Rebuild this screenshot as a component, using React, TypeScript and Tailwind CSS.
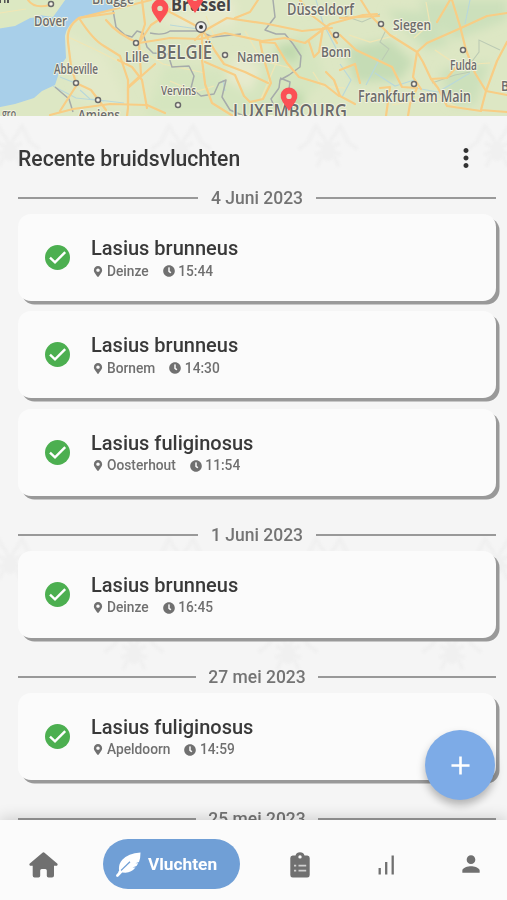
import React from "react";
import { FaMapMarkerAlt, FaClock } from "react-icons/fa";
import { MdMoreVert, MdAdd, MdPerson } from "react-icons/md";

type Place = { t: string; x: number; y: number; w: number; s: number; b?: boolean };

const places: Place[] = [
  { t: "Dover", x: 34, y: 26, w: 33, s: 14 },
  { t: "Brugge", x: 92, y: 4, w: 42, s: 14 },
  { t: "Lille", x: 125, y: 62, w: 24, s: 15 },
  { t: "Abbeville", x: 54, y: 74, w: 44, s: 13.5 },
  { t: "Amiens", x: 78, y: 120, w: 42, s: 14 },
  { t: "Vervins", x: 161, y: 95, w: 35, s: 13 },
  { t: "Namen", x: 237, y: 62, w: 42, s: 14 },
  { t: "Düsseldorf", x: 287, y: 15, w: 67, s: 16 },
  { t: "Siegen", x: 393, y: 30, w: 38, s: 14 },
  { t: "Bonn", x: 321, y: 57, w: 30, s: 14.5 },
  { t: "Fulda", x: 450, y: 70, w: 27, s: 13.5 },
  { t: "Frankfurt am Main", x: 358, y: 102, w: 113, s: 16 },
  { t: "Brussel", x: 171, y: 11, w: 60, s: 17, b: true },
  { t: "BELGIË", x: 156, y: 59, w: 56, s: 20 },
  { t: "LUXEMBOURG", x: 233, y: 118, w: 114, s: 19 },
  { t: "B", x: 501, y: 91, w: 8, s: 14 },
  { t: "gro", x: 2, y: 118, w: 14, s: 13 },
];

const roads = [
  "M28 0 Q34 9 50 5",
  "M114 13L79 18Q66 27 68 42L71 66L76 83L91 90L106 110",
  "M79 18Q93 40 104 46L120 56L128 80V108L127 116",
  "M79 18L115 9L151 0",
  "M106 20Q118 35 139 43L151 25L163 17L170 9",
  "M139 43L145 24L142 0",
  "M139 43L170 38L200 39L225 33L262 41L285 38L305 43L330 24L363 15L377 14",
  "M139 43L141 75L128 87V104",
  "M118 60L132 67L142 80L147 108",
  "M128 88L155 64",
  "M60 111L78 83",
  "M50 115L73 109L110 104L147 105L165 113",
  "M170 12L202 29L215 51L224 64L245 72L268 83",
  "M202 29L202 60L205 83",
  "M195 40L204 31L227 18L268 24L302 31L332 28",
  "M205 62L235 75L244 96L250 102L263 99L271 83L263 56L260 42",
  "M260 42L275 43L287 63L299 77L325 85L339 96",
  "M323 28L319 52L314 57L309 42",
  "M235 18L250 12L258 0",
  "M300 0L310 14L327 27L337 43",
  "M205 84L212 103L233 116",
  "M326 72L334 80L340 96L355 104",
  "M340 18L379 16",
  "M361 0L371 16L390 35L417 52L413 77L421 89",
  "M340 35L356 50L373 58L392 67L402 87L417 88",
  "M417 52L423 62L431 79L447 78L458 65",
  "M437 22L450 0M452 0L460 26L466 50L475 73L486 91L507 95",
  "M417 52L427 43L461 28L487 16L507 13",
  "M340 70L355 64L360 83",
  "M507 42L497 61L486 91L481 110L507 112",
  "M417 88L410 104L408 116M431 79L438 88L447 106L481 111",
  "M380 88L390 87L386 116",
];

const borders = [
  "M113 10L116 27L125 35L132 37L137 31L143 33L147 47L153 53L168 54L172 67L189 66L194 76L191 88L201 96L214 94L219 83L226 80L222 97L230 110L244 116",
  "M150 33Q163 36 170 31L198 31L213 37L241 34",
  "M273 0L275 17L265 30L276 34L285 34L293 44L301 56L300 67L289 75L280 80L279 88",
  "M279 88L271 99L275 108M280 78L290 82L288 96",
  "M55 87L69 99L73 112",
];

const regionLines = "M382 60L389 49L380 42L386 30M500 50L479 40L479 52L470 64M432 83L455 75L470 72M345 16L362 22L380 14";

const dots = [
  [51, 4], [136, 43], [76, 83], [98, 100], [225, 55], [178, 105], [336, 35], [381, 24], [463, 50], [414, 84],
];

function Pin({ x, y }: { x: number; y: number }) {
  return (
    <g transform={`translate(${x} ${y})`}>
      <path d="M0 0L-6.3-9Q-8.9-13-8.3-16.5A8.4 8.4 0 0 1 8.3-16.5Q8.9-13 6.3-9Z" fill="#fb5055" />
      <circle cx="0" cy="-14.6" r="2.7" fill="#dde2c4" />
    </g>
  );
}

function MapView() {
  return (
    <svg className="block h-[116px] w-full shrink-0" viewBox="0 0 507 116">
      <defs>
        <filter id="soft" x="-20%" y="-20%" width="140%" height="140%"><feGaussianBlur stdDeviation="5" /></filter>
        <filter id="soften"><feGaussianBlur stdDeviation="0.5" /></filter>
      </defs>
      <rect width="507" height="116" fill="#dde7c4" />
      <g filter="url(#soft)">
        <path d="M165 65L245 72L310 30L325 80L285 116H145Z" fill="#d5e5bf" />
        <path d="M345 48L390 40L413 62L400 80L355 82Z" fill="#c5dcb5" />
        <path d="M418 0H507V20L455 40L430 18ZM440 70L490 62L475 105L450 105ZM385 10L430 12L450 45L427 50Z" fill="#cce0bb" />
        <path d="M60 30L105 55L130 110L80 98Z" fill="#e2e9c9" />
        <path d="M235 55L262 68L250 92L225 80ZM155 20L235 0V25L180 30Z" fill="#e7eacd" />
        <path d="M277 45L301 43L296 63L278 56ZM285 91L304 94L302 110L276 108Z" fill="#bfd9ad" />
      </g>
      <g filter="url(#soften)">
        <path d="M-4 29L14 25L29 18Q37 18 39 15L53 17L68-4H134L117 9L79 17Q66 26 65 36L66 58Q60 65 58 76L55 85L42 91L34 98L15 104L-4 108Z" fill="#a8cfe9" />
        <path d="M-4 29L15 26L32 17L68-4H-4Z" fill="#dce8c2" />
        <g fill="none" stroke="#b9d8da" strokeWidth="1.2">
          <path d="M60 77L75 83M53 86L76 98L104 101M80 90L90 99L124 103M225 91L223 80M170 25L205 30M316 0L323 23L341 58M414 80L395 86L375 73" />
          <path d="M340 64L351 80L342 97M380 58L366 85M470 0L465 24M410 87L438 92L470 73" />
        </g>
        <g fill="none" stroke="#f1e6b4" strokeWidth="1.2">
          <path d="M0 13L26 9M68 37L92 48L130 67M170 81L195 92L214 86M141 50L163 64L205 73M206 16L215 38M245 31L262 61L291 68M313 72L322 86L345 88M349 35L370 42L397 35M426 2L430 24L414 38M435 50L457 65L490 63M392 105L434 97L460 108M277 61L261 99" />
        </g>
        <g fill="none" stroke="#a6abaa" strokeWidth="1.5" strokeLinejoin="round">
          {borders.map((d) => <path key={d} d={d} />)}
        </g>
        <path d={regionLines} fill="none" stroke="#bccbb4" strokeWidth="1.1" />
        <g fill="none" stroke="#f8cd85" strokeWidth="2.2" strokeLinejoin="round" strokeLinecap="round">
          {roads.map((d) => <path key={d} d={d} />)}
        </g>
      </g>
      {dots.map(([x, y]) => (
        <circle key={`${x}-${y}`} cx={x} cy={y} r="2.5" fill="#f5f2e6" stroke="#6a6a6a" strokeWidth="1.5" />
      ))}
      <circle cx="201" cy="27" r="5.2" fill="#eee" stroke="#666" strokeWidth="1.4" />
      <circle cx="201" cy="27" r="2" fill="#333" />
      <path d="M0 0h1v3h-1zM4 0h1.5v3H4zM7 0h2v3H7z" fill="#555" />
      <g fontFamily="'Open Sans', 'Noto Sans', sans-serif" stroke="#f2f2df" strokeWidth="2.2" strokeLinejoin="round" paintOrder="stroke">
        {places.map((p) => (
          <text key={p.t} x={p.x} y={p.y} fontSize={p.s} fontWeight={p.b ? 700 : 600} textLength={p.w} lengthAdjust="spacingAndGlyphs" fill={p.b ? "#444" : "#6c6c6c"}>{p.t}</text>
        ))}
      </g>
      <Pin x={160} y={23} />
      <Pin x={195} y={13} />
      <Pin x={289} y={111} />
    </svg>
  );
}

function Ant({ x, y }: { x: number; y: number }) {
  return (
    <g transform={`translate(${x} ${y})`} fill="none" stroke="#f0f0f0" strokeWidth="4" strokeLinecap="round" strokeLinejoin="round">
      <path d="M-28 26L-20 20L-12 4L0 23L12 4L20 20L28 26" />
      <path d="M-10 22L0 27L10 22M-11 32L0 28L11 32M-10 43L-7 36L0 33L7 36L10 43" />
      <ellipse cy="29" rx="5" ry="8" fill="#f0f0f0" />
    </g>
  );
}

function Backdrop() {
  return (
    <svg className="absolute inset-0 h-full w-full" viewBox="0 0 507 704">
      <defs><filter id="faint"><feGaussianBlur stdDeviation="0.8" /></filter></defs>
      <g filter="url(#faint)">
        <Ant x={10} y={6} /><Ant x={181} y={6} /><Ant x={328} y={6} /><Ant x={497} y={6} />
        <Ant x={10} y={419} /><Ant x={181} y={419} /><Ant x={328} y={419} /><Ant x={497} y={419} />
        <Ant x={134} y={509} /><Ant x={288} y={509} /><Ant x={452} y={509} />
      </g>
    </svg>
  );
}

function DateRule({ label }: { label: string }) {
  return (
    <div className="flex h-[28px] items-center gap-[12.5px] pr-[11px] pl-[18px]">
      <div className="h-[2px] flex-1 bg-[#999]" />
      <span className="pt-[2px] text-[17.5px] leading-none font-medium whitespace-nowrap text-[#747474]">{label}</span>
      <div className="h-[2px] flex-1 bg-[#999]" />
    </div>
  );
}

function Flight({ name, place, time }: { name: string; place: string; time: string }) {
  return (
    <div className="mr-[11px] mb-[10.3px] ml-[18px] flex h-[87px] items-center rounded-[13px] bg-[#fbfbfb] pl-[27px] shadow-[3.5px_3.5px_0_#999]">
      <svg className="h-[25px] w-[25px]" viewBox="0 0 25 25">
        <circle cx="12.5" cy="12.5" r="12.5" fill="#4caf50" />
        <path d="M5 12.7L10 17.4L20.2 7.2" fill="none" stroke="#fff" strokeWidth="2.4" />
      </svg>
      <div className="ml-[21px] pt-[2px]">
        <div className="text-[20px] leading-[24px] font-medium text-[#393939]">{name}</div>
        <div className="mt-px flex h-[20px] items-center pl-[2px] text-[13.75px] font-medium text-[#707070]">
          <FaMapMarkerAlt className="h-[11px] w-[10px]" />
          <span className="ml-1">{place}</span>
          <FaClock className="ml-[14px] h-[12px] w-[12px]" />
          <span className="ml-[3.5px]">{time}</span>
        </div>
      </div>
    </div>
  );
}

function HouseIcon() {
  return (
    <svg className="h-[26px] w-[29px]" viewBox="0 0 29 26" fill="currentColor">
      <path d="M13.2.9Q14.5-.2 15.8.9L28.2 11.6Q29.2 12.7 28 13.7H25V23.5Q25 25.5 23 25.5H19.5Q17.8 25.5 17.8 23.7V18.5Q17.8 17 16.3 17H12.7Q11.2 17 11.2 18.5V23.7Q11.2 25.5 9.5 25.5H5.5Q3.7 25.5 3.7 23.5V13.7H1Q-.2 12.7.8 11.6Z" />
    </svg>
  );
}

function FeatherIcon() {
  return (
    <svg className="h-[25px] w-[25px]" viewBox="0 0 25 25">
      <path d="M24.5.5Q24.5 6.5 23 10L19.4 11.2H22.2L20.5 14L16.5 15.4H19.5Q15.5 20.3 9.5 20.7L6.2 20.5L2.4 24.5Q1.2 25.4.4 24.5Q-.3 23.6.5 22.5L3.2 19.5Q2 12.5 6.3 7.8Q12 1.4 24.5.5Z" fill="#fff" />
      <path d="M3.3 20.1L14 9.8" stroke="#709fd6" strokeWidth="1.3" fill="none" />
      <path d="M2.8 20.9L5.2 18.6" stroke="#fff" strokeWidth="2.2" />
    </svg>
  );
}

function ClipboardIcon() {
  return (
    <svg className="h-[26px] w-[20px]" viewBox="0 0 20 26">
      <path d="M2.7 3.5H5.5Q6.5.3 10 .3T14.5 3.5H17.3Q19.7 3.5 19.7 6V23Q19.7 25.5 17.3 25.5H2.7Q.3 25.5.3 23V6Q.3 3.5 2.7 3.5Z" fill="currentColor" />
      <circle cx="10" cy="4.9" r="1.7" fill="#fbfbfb" />
      <path d="M4 13.7h2.2M8.5 13.7h7.7M4 18.6h2.2M8.5 18.6h7.7" stroke="#d0d0d0" strokeWidth="1.7" />
    </svg>
  );
}

export default function App() {
  return (
    <div className="relative flex h-[900px] w-[507px] flex-col overflow-hidden bg-[#f5f5f5] font-['Roboto',sans-serif]">
      <MapView />
      <main className="relative h-[704px] shrink-0 overflow-hidden">
        <Backdrop />
        <div className="relative">
          <header className="flex h-[68px] items-center justify-between pt-[17px] pr-[26px] pl-[18px]">
            <h1 className="text-[21.15px] font-medium text-[#393939]">Recente bruidsvluchten</h1>
            <MdMoreVert className="mb-[2px] h-[30px] w-[30px] text-[#333]" />
          </header>
          <section className="h-[336.5px]">
            <DateRule label="4 Juni 2023" />
            <div className="pt-[2px]">
              <Flight name="Lasius brunneus" place="Deinze" time="15:44" />
              <Flight name="Lasius brunneus" place="Bornem" time="14:30" />
              <Flight name="Lasius fuliginosus" place="Oosterhout" time="11:54" />
            </div>
          </section>
          <section className="h-[142px]">
            <DateRule label="1 Juni 2023" />
            <div className="pt-[2px]"><Flight name="Lasius brunneus" place="Deinze" time="16:45" /></div>
          </section>
          <section className="h-[142px]">
            <DateRule label="27 mei 2023" />
            <div className="pt-[2px]"><Flight name="Lasius fuliginosus" place="Apeldoorn" time="14:59" /></div>
          </section>
          <DateRule label="25 mei 2023" />
        </div>
      </main>
      <nav className="relative flex h-[80px] shrink-0 items-center bg-[#fbfbfb] pt-[8px] pl-[29px] text-[#707070] shadow-[0_-2px_14px_rgba(0,0,0,0.16)]">
        <div className="pt-[2px]"><HouseIcon /></div>
        <div className="ml-[45px] flex h-[50px] w-[137px] items-center rounded-full bg-[#709fd6] pt-px pl-[13px] text-white">
          <FeatherIcon />
          <span className="ml-[7px] pt-px text-[17.3px] font-bold">Vluchten</span>
        </div>
        <div className="ml-[50px] pt-[2px]"><ClipboardIcon /></div>
        <svg className="mt-[2px] ml-[68px] h-[20px] w-[17px]" viewBox="0 0 17 20">
          <path d="M1.7 13v6.5M8.2 7v12.5M14.7 .5v19" stroke="currentColor" strokeWidth="2.3" fill="none" />
        </svg>
        <MdPerson className="ml-[63px] h-[26px] w-[26px]" />
      </nav>
      <button className="absolute top-[730px] left-[425px] flex h-[70px] w-[70px] items-center justify-center rounded-full bg-[#7dabe7] text-white shadow-[0_5px_9px_rgba(0,0,0,0.28)]">
        <MdAdd className="h-[31px] w-[31px]" />
      </button>
    </div>
  );
}
